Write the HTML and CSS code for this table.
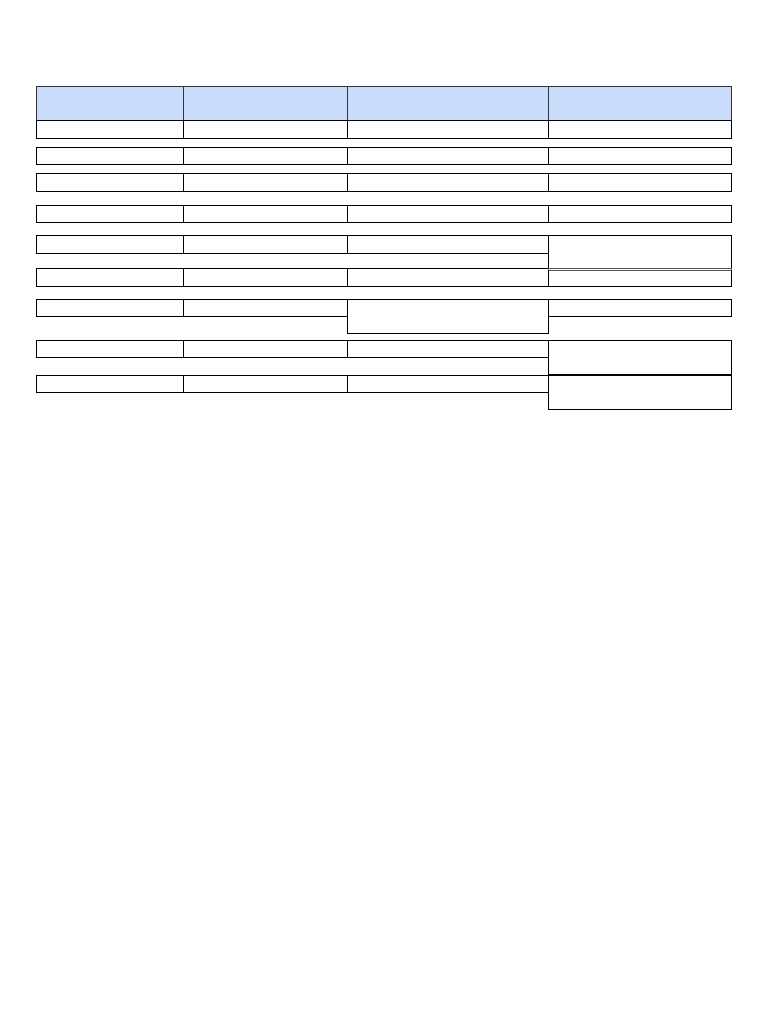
FILE: index.html
```html
<!DOCTYPE html>
<html>
<head>
<meta charset="utf-8">
<title>Table</title>
<link rel="stylesheet" href="styles.css">
</head>
<body>
<div class="sheet">
  <div class="blk b1">
    <div class="c h"></div><div class="c h"></div><div class="c h"></div><div class="c h"></div>
    <div class="c"></div><div class="c"></div><div class="c"></div><div class="c"></div>
  </div>
  <div class="blk b2">
    <div class="c"></div><div class="c"></div><div class="c"></div><div class="c"></div>
  </div>
  <div class="blk b3">
    <div class="c"></div><div class="c"></div><div class="c"></div><div class="c"></div>
  </div>
  <div class="blk b4">
    <div class="c"></div><div class="c"></div><div class="c"></div><div class="c"></div>
  </div>
  <div class="blk b5">
    <div class="c"></div><div class="c"></div><div class="c"></div><div class="c span-r2"></div>
    <div class="c r3 col1"></div><div class="c r3 col2"></div><div class="c r3 col3"></div><div class="c r3 col4 dbl"></div>
  </div>
  <div class="blk b7">
    <div class="c"></div><div class="c"></div><div class="c span-r2"></div><div class="c"></div>
  </div>
  <div class="blk b8">
    <div class="c"></div><div class="c"></div><div class="c"></div><div class="c span-r2"></div>
  </div>
  <div class="blk b9">
    <div class="c"></div><div class="c"></div><div class="c"></div><div class="c span-r2"></div>
  </div>
</div>
</body>
</html>
```
FILE: styles.css
```css
html, body {
  margin: 0;
  padding: 0;
  background: #ffffff;
  font-family: "Liberation Sans", Arial, sans-serif;
}

.sheet {
  padding: 86px 0 40px 36px;
}

.blk {
  display: grid;
  grid-template-columns: 147px 164px 201px 183px;
  width: 695px;
  padding-bottom: 1px;
}

.c {
  border: 1px solid #000;
  margin: 0 -1px -1px 0;
  background: #fff;
}

.h {
  background: #cadcfc;
  border-color: #333;
}

.b1 { grid-template-rows: 34px 18px; }
.b2 { grid-template-rows: 17px; margin-top: 8px; }
.b3 { grid-template-rows: 18px; margin-top: 8px; }
.b4 { grid-template-rows: 17px; margin-top: 13px; }
.b5 { grid-template-rows: 18px 15px 18px; margin-top: 12px; }
.b7 { grid-template-rows: 17px 17px; margin-top: 12px; }
.b8 { grid-template-rows: 17px 17px; margin-top: 6px; }
.b9 { grid-template-rows: 17px 17px; margin-top: 0; }

.span-r2 { grid-row: span 2; }

.r3 { grid-row: 3; }
.col1 { grid-column: 1; }
.col2 { grid-column: 2; }
.col3 { grid-column: 3; }
.col4 { grid-column: 4; }

.dbl {
  border-top: 3px double #555;
}
```
